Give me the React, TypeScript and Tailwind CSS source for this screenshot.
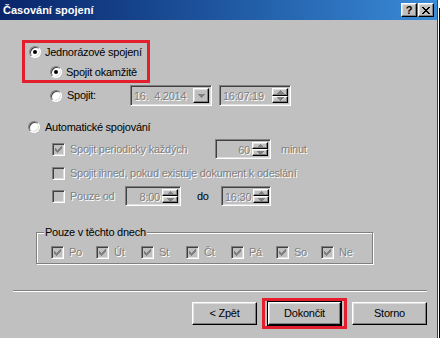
import React from "react"

const raised =
  "border border-t-white border-l-white border-r-black border-b-black bg-[#c0c0c0] shadow-[inset_-1px_-1px_0_#808080,inset_1px_1px_0_#dfdfdf]"
const sunken =
  "border border-t-[#808080] border-l-[#808080] border-r-white border-b-white shadow-[inset_1px_1px_0_#404040,inset_-1px_-1px_0_#dfdfdf]"
const dim = "text-[#808080] [text-shadow:1px_1px_0_#fff]"

function Radio({ checked = false }: { checked?: boolean }) {
  return (
    <span className={`flex h-[12px] w-[12px] shrink-0 items-center justify-center rounded-full bg-white ${sunken}`}>
      {checked && <span className="h-[4px] w-[4px] rounded-full bg-black" />}
    </span>
  )
}

function Check({ checked = false }: { checked?: boolean }) {
  return (
    <span className={`flex h-[13px] w-[13px] shrink-0 items-center justify-center bg-[#c0c0c0] ${sunken}`}>
      {checked && (
        <svg width="7" height="7" viewBox="0 0 7 7" shapeRendering="crispEdges">
          <path
            d="M0 2h1v3h-1zM1 3h1v3h-1zM2 4h1v3h-1zM3 3h1v3h-1zM4 2h1v3h-1zM5 1h1v3h-1zM6 0h1v3h-1z"
            fill="#808080"
          />
        </svg>
      )}
    </span>
  )
}

function Arrow({ up = false }: { up?: boolean }) {
  return (
    <svg width="7" height="4" viewBox="0 0 7 4" shapeRendering="crispEdges">
      <path d={up ? "M3 0h1v1h1v1h1v1h1v1h-7v-1h1v-1h1v-1h1z" : "M0 0h7v1h-1v1h-1v1h-1v1h-1v-1h-1v-1h-1v-1h-1z"} fill="#808080" />
    </svg>
  )
}

function Spinner() {
  return (
    <div className="flex h-full w-[16px] shrink-0 flex-col">
      <div className={`flex flex-1 items-center justify-center ${raised}`}>
        <Arrow up />
      </div>
      <div className={`flex flex-1 items-center justify-center ${raised}`}>
        <Arrow />
      </div>
    </div>
  )
}

function Field({
  value,
  width,
  height = "h-[20px]",
  align = "text-left",
  kind,
}: {
  value: string
  width: string
  height?: string
  align?: string
  kind: "spin" | "drop"
}) {
  return (
    <div className={`flex ${width} ${height} shrink-0 bg-[#c0c0c0] p-[2px] ${sunken}`}>
      <span className={`flex-1 whitespace-pre pl-[1px] pr-[2px] leading-[16px] ${align} ${dim}`}>{value}</span>
      {kind === "spin" ? (
        <Spinner />
      ) : (
        <div className={`flex w-[16px] items-center justify-center ${raised}`}>
          <Arrow />
        </div>
      )}
    </div>
  )
}

function Button({ label, width = "w-[75px]" }: { label: string; width?: string }) {
  return (
    <div className={`flex h-[23px] ${width} items-center justify-center ${raised}`}>{label}</div>
  )
}

const days = ["Po", "Út", "St", "Čt", "Pá", "So", "Ne"]

export default function App() {
  return (
    <div className="flex h-[338px] w-[441px] overflow-hidden bg-white font-['Liberation_Sans',Arial,sans-serif] text-[11px] tracking-[-0.25px] text-black">
      <div className="flex h-full w-[438px] shrink-0 flex-col border-r border-[#404040] bg-[#c0c0c0]">
        {/* title bar */}
        <div className="flex h-[20px] shrink-0 items-center bg-linear-to-r from-[#0a246a] to-[#3a8bd8] pl-[3px] pr-[3px]">
          <span className="font-bold tracking-normal text-white">Časování spojení</span>
          <div className="ml-auto flex gap-[1px]">
            <div className={`flex h-[14px] w-[16px] items-center justify-center text-[11px] font-bold leading-none ${raised}`}>?</div>
            <div className={`flex h-[14px] w-[16px] items-center justify-center ${raised}`}>
              <svg width="8" height="7" viewBox="0 0 8 7" shapeRendering="crispEdges">
                <path d="M0 0h2v1h1v1h2v-1h1v-1h2v1h-1v1h-1v1h-1v1h1v1h1v1h1v1h-2v-1h-1v-1h-2v1h-1v1h-2v-1h1v-1h1v-1h1v-1h-1v-1h-1v-1h-1z" fill="#000" />
              </svg>
            </div>
          </div>
        </div>

        {/* one-time connection */}
        <div className="ml-[22px] mt-[20px] flex h-[43px] w-[128px] flex-col gap-[4px] border-[3px] border-[#e31e2d] pt-[1px]">
          <div className="flex h-[16px] items-center gap-[4px] pl-[4px]">
            <Radio checked />
            <span>Jednorázové spojení</span>
          </div>
          <div className="flex h-[16px] items-center gap-[4px] pl-[25px]">
            <Radio checked />
            <span>Spojit okamžitě</span>
          </div>
        </div>

        <div className="ml-[50px] mt-[2px] flex h-[21px] items-center">
          <Radio />
          <span className="ml-[5px] w-[63px]">Spojit:</span>
          <Field value="16.  4.2014" width="w-[82px]" height="h-[21px]" kind="drop" />
          <div className="ml-[7px]">
            <Field value="16:07:19" width="w-[72px]" height="h-[21px]" kind="spin" />
          </div>
        </div>

        {/* automatic */}
        <div className="ml-[28px] mt-[13px] flex h-[16px] items-center gap-[5px]">
          <Radio />
          <span>Automatické spojování</span>
        </div>

        <div className="ml-[52px] mt-[4px] flex h-[20px] items-center">
          <Check checked />
          <span className={`ml-[5px] w-[145px] ${dim}`}>Spojit periodicky každých</span>
          <Field value="60" width="w-[56px]" align="text-right" kind="spin" />
          <span className={`ml-[10px] ${dim}`}>minut</span>
        </div>

        <div className="ml-[52px] mt-[6px] flex h-[16px] items-center">
          <Check />
          <span className={`ml-[5px] ${dim}`}>Spojit ihned, pokud existuje dokument k odeslání</span>
        </div>

        <div className="ml-[52px] mt-[5px] flex h-[20px] items-center">
          <Check />
          <span className={`ml-[5px] w-[55px] ${dim}`}>Pouze od</span>
          <Field value="8:00" width="w-[56px]" align="text-right" kind="spin" />
          <span className="ml-[16px] w-[24px]">do</span>
          <Field value="16:30" width="w-[50px]" kind="spin" />
        </div>

        {/* days group */}
        <div className="relative ml-[36px] mt-[26px] h-[32px] w-[337px] border border-[#808080] shadow-[inset_1px_1px_0_#fff,1px_1px_0_#fff]">
          <span className="absolute -top-[8px] left-[7px] bg-[#c0c0c0] px-[1px] leading-[14px]">Pouze v těchto dnech</span>
          <div className="flex pl-[14px] pt-[11px]">
            {days.map((d) => (
              <div key={d} className="flex w-[45px] items-center gap-[5px]">
                <Check checked />
                <span className={dim}>{d}</span>
              </div>
            ))}
          </div>
        </div>

        <div className="ml-[13px] mr-[10px] mt-[26px] border-t border-b border-t-[#808080] border-b-white" />

        <div className="mt-[6px] flex h-[30px] items-center justify-end pr-[10px]">
          <Button label="< Zpět" width="w-[65px]" />
          <div className="ml-[5px] border-[3px] border-[#e31e2d] px-[2px]">
            <div className="border border-black">
              <Button label="Dokončit" width="w-[73px]" />
            </div>
          </div>
          <div className="ml-[5px]">
            <Button label="Storno" />
          </div>
        </div>
      </div>
      <div className="ml-[1px] mt-[8px] w-[1px] bg-black" />
    </div>
  )
}
